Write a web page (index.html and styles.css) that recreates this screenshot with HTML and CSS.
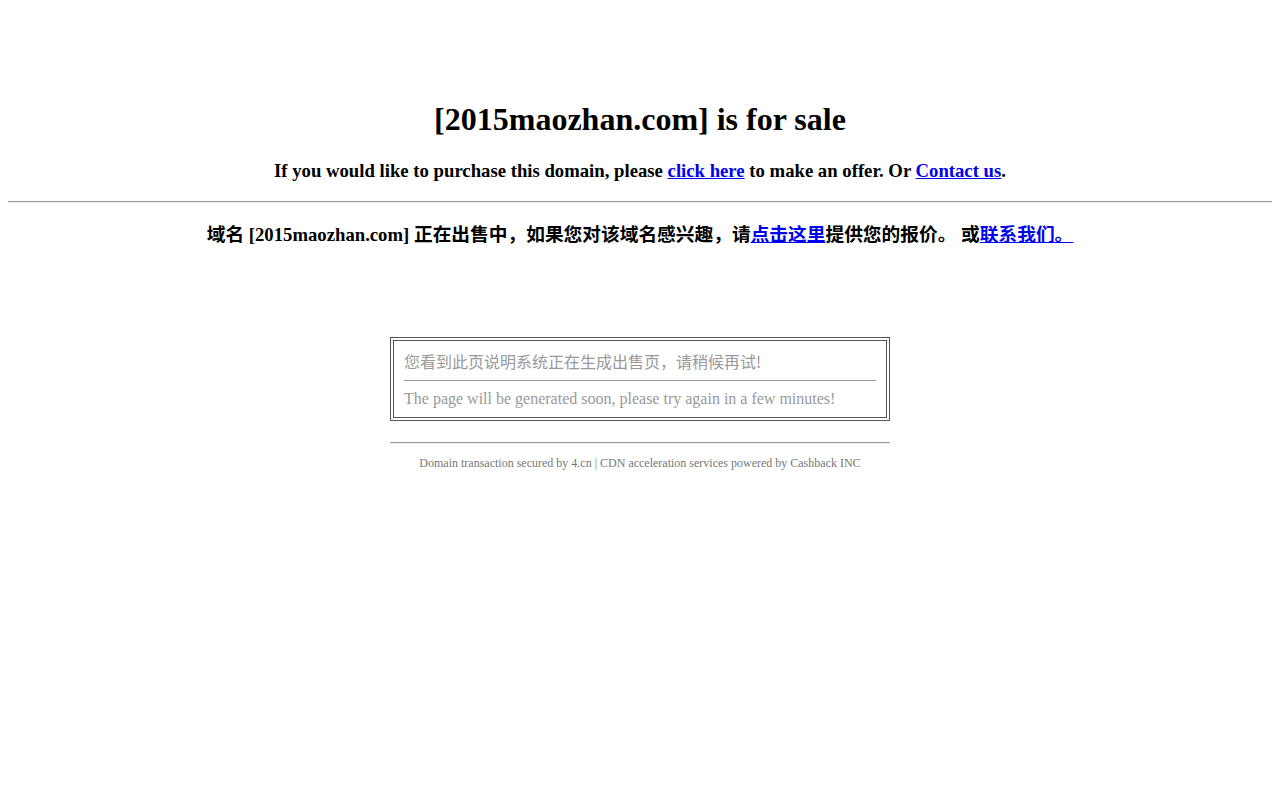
FILE: index.html
```html
<!DOCTYPE html>
<html>
<head>
<meta charset="utf-8">
<title>2015maozhan.com is for sale</title>
<link rel="stylesheet" href="styles.css">
</head>
<body>
<div class="page">
  <h1 class="title">[2015maozhan.com] is for sale</h1>
  <h3 class="sub">If you would like to purchase this domain, please <a href="#">click here</a> to make an offer. Or <a href="#">Contact us</a>.</h3>
  <hr class="rule">
  <h3 class="sub cn">域名 [2015maozhan.com] 正在出售中，如果您对该域名感兴趣，请<a href="#">点击这里</a>提供您的报价。 或<a href="#">联系我们。</a></h3>
  <div class="boxwrap">
    <div class="box">
      <div class="cell">
        <div class="msg-cn">您看到此页说明系统正在生成出售页，请稍候再试!</div>
        <hr class="inner">
        <div class="msg-en">The page will be generated soon, please try again in a few minutes!</div>
      </div>
    </div>
  </div>
  <hr class="foot-rule">
  <div class="footer">Domain transaction secured by 4.cn | CDN acceleration services powered by Cashback INC</div>
</div>
</body>
</html>
```

FILE: styles.css
```css
html, body {
  margin: 0;
  padding: 0;
  background: #fff;
}
body {
  font-family: "Liberation Serif", "Noto Sans CJK SC", serif;
  color: #000;
}
.page {
  padding: 101px 8px 0;
  text-align: center;
}
.title {
  font-size: 32px;
  line-height: 37px;
  margin: 0 0 22px;
  font-weight: bold;
}
.sub {
  font-size: 18.72px;
  line-height: 21px;
  margin: 0;
  font-weight: bold;
}
.sub a {
  color: #0000ee;
  text-decoration: underline;
}
.rule {
  margin: 20px 0 18px;
  border: 0;
  border-top: 1px solid #9a9a9a;
  border-bottom: 1px solid #eeeeee;
  height: 0;
}
.cn {
  line-height: 27px;
}
.boxwrap {
  display: flex;
  justify-content: center;
  margin-top: 89px;
}
.box {
  width: 500px;
  box-sizing: border-box;
  border: 1px solid #555;
  padding: 2px;
}
.cell {
  border: 1px solid #555;
  padding: 10px 10px 9px;
  text-align: left;
  color: #999;
}
.msg-cn {
  font-family: "Noto Sans CJK SC", sans-serif;
  font-size: 16px;
  line-height: 21px;
}
.inner {
  margin: 8px 0 9px;
  border: 0;
  border-top: 1px solid #999;
  height: 0;
}
.msg-en {
  font-size: 16px;
  line-height: 18px;
}
.foot-rule {
  width: 500px;
  margin: 21px auto 0;
  border: 0;
  border-top: 1px solid #9a9a9a;
  border-bottom: 1px solid #eee;
  height: 0;
}
.footer {
  margin-top: 12px;
  font-size: 12px;
  line-height: 15px;
  color: #777;
}
```
